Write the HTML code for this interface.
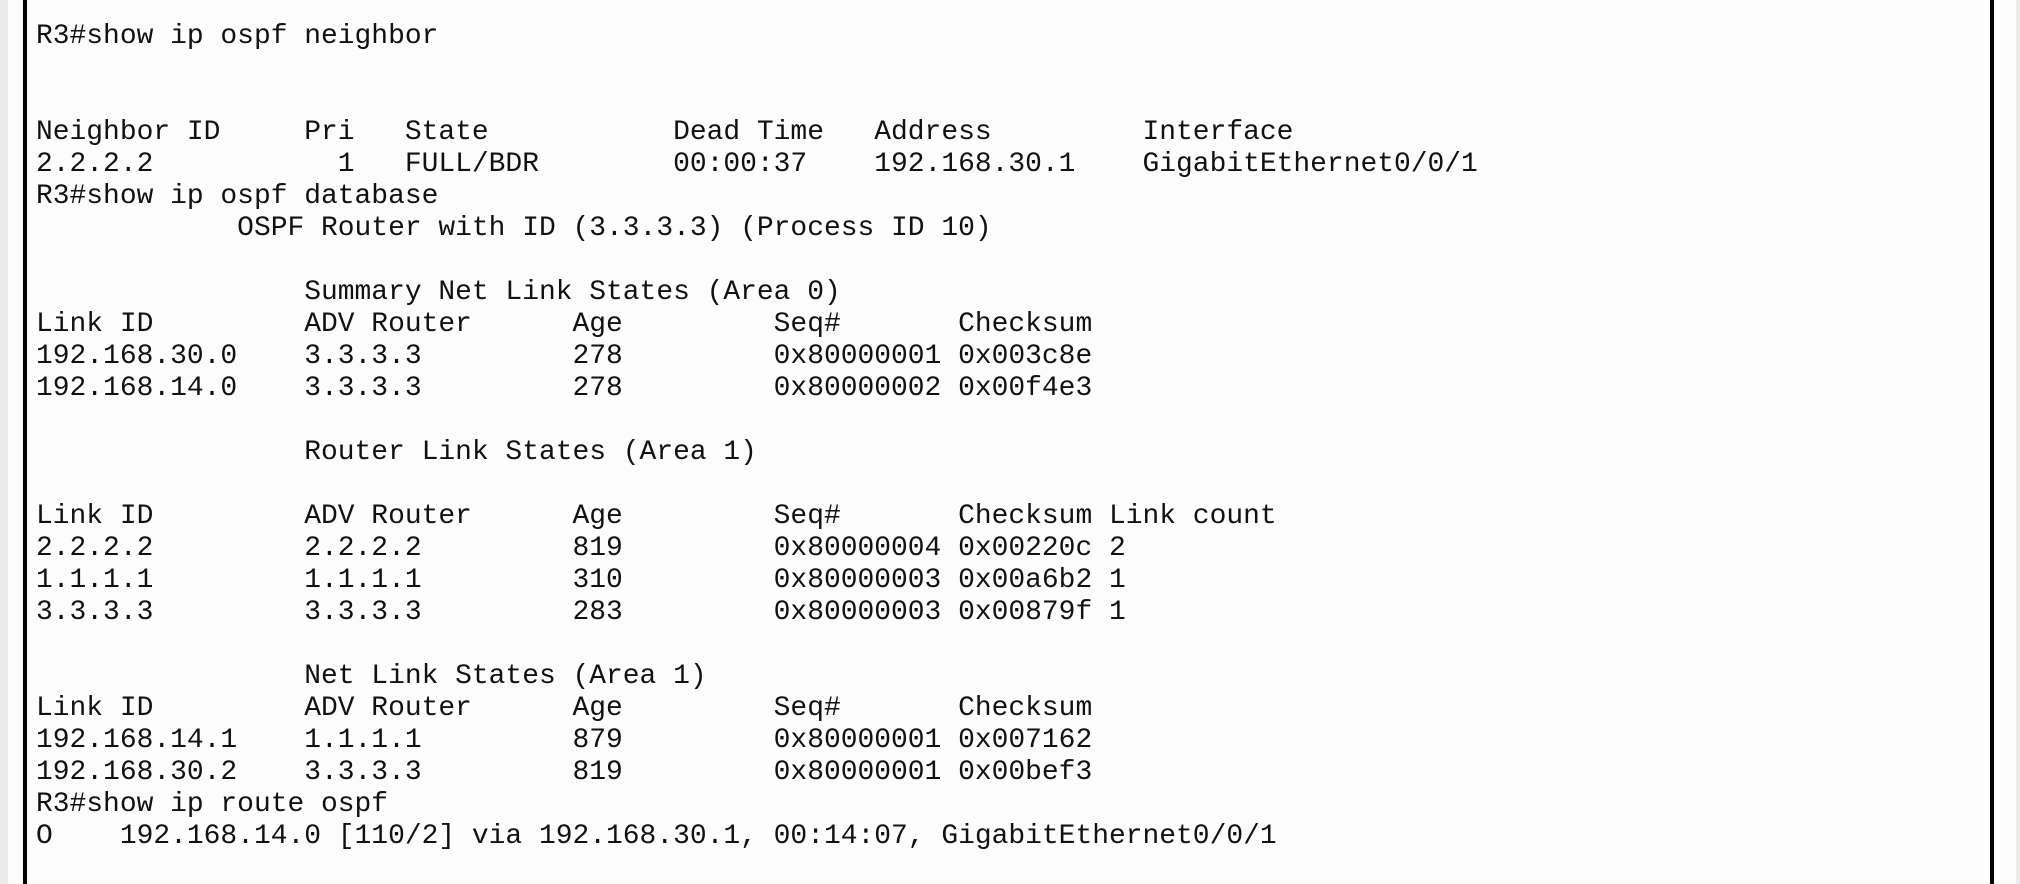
<!DOCTYPE html>
<html><head><meta charset="utf-8"><style>
html,body{margin:0;padding:0;}
body{width:2020px;height:884px;background:#ececec;position:relative;overflow:hidden;}
.box{position:absolute;left:8px;top:0;width:2008px;height:884px;background:#fcfcfc;}
.bl{position:absolute;left:23px;top:0;width:4px;height:884px;background:#000;}
.br{position:absolute;left:1990px;top:0;width:4px;height:884px;background:#000;}
pre{position:absolute;left:36px;top:21px;margin:0;font-family:"Liberation Mono","Courier New",monospace;font-size:27.95px;line-height:32px;color:#111;}
</style></head><body>
<div class="box"></div><div class="bl"></div><div class="br"></div>
<pre>R3#show ip ospf neighbor


Neighbor ID     Pri   State           Dead Time   Address         Interface
2.2.2.2           1   FULL/BDR        00:00:37    192.168.30.1    GigabitEthernet0/0/1
R3#show ip ospf database
            OSPF Router with ID (3.3.3.3) (Process ID 10)

                Summary Net Link States (Area 0)
Link ID         ADV Router      Age         Seq#       Checksum
192.168.30.0    3.3.3.3         278         0x80000001 0x003c8e
192.168.14.0    3.3.3.3         278         0x80000002 0x00f4e3

                Router Link States (Area 1)

Link ID         ADV Router      Age         Seq#       Checksum Link count
2.2.2.2         2.2.2.2         819         0x80000004 0x00220c 2
1.1.1.1         1.1.1.1         310         0x80000003 0x00a6b2 1
3.3.3.3         3.3.3.3         283         0x80000003 0x00879f 1

                Net Link States (Area 1)
Link ID         ADV Router      Age         Seq#       Checksum
192.168.14.1    1.1.1.1         879         0x80000001 0x007162
192.168.30.2    3.3.3.3         819         0x80000001 0x00bef3
R3#show ip route ospf
O    192.168.14.0 [110/2] via 192.168.30.1, 00:14:07, GigabitEthernet0/0/1</pre>
</body></html>
